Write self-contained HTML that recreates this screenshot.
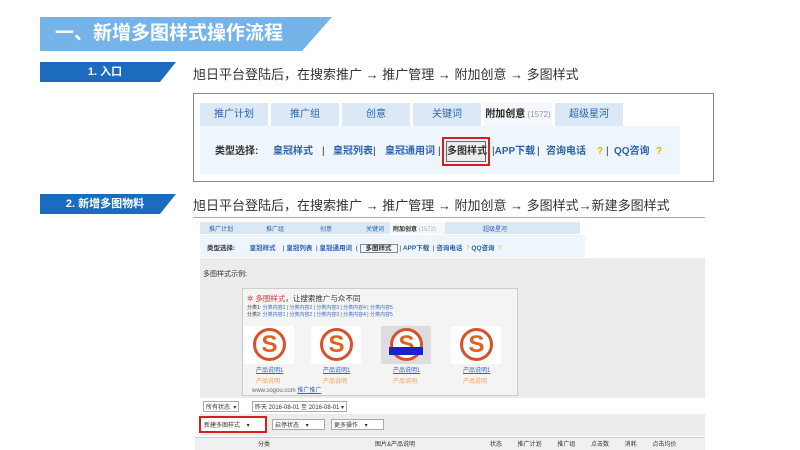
<!DOCTYPE html>
<html><head><meta charset="utf-8"><style>
*{margin:0;padding:0;box-sizing:border-box}
body{width:800px;height:450px;background:#fff;position:relative;overflow:hidden;font-family:"Liberation Sans","Noto Sans CJK SC",sans-serif;color:#333}
.a{position:absolute;white-space:nowrap}
.s{font-size:8px;white-space:nowrap}
.tab{position:absolute;background:#dbe9f6;color:#2a62b0;text-align:center;font-size:10px}
.lk{color:#2a62b0;font-weight:bold}
.r1{position:absolute;top:146px;font-size:10px;line-height:12px;white-space:nowrap}
.logo{position:absolute;width:50px;height:38px;background:#fff}
.logo .c{position:absolute;left:9px;top:2px;width:33px;height:33px;border-radius:50%;border:3px solid #d9502a;background:#fff;color:#e06020;font:bold 24px/27px "Liberation Sans",sans-serif;text-align:center}
</style></head><body>
<svg class="a" style="left:40px;top:17px" width="292" height="34"><polygon points="0,0 292,0 262,34 0,34" fill="#75b3e8"/></svg>
<div class="a" style="left:55px;top:19px;color:#fff;font-size:19px;font-weight:bold;line-height:30px">一、新增多图样式操作流程</div>

<svg class="a" style="left:40px;top:62px" width="136" height="20"><polygon points="0,0 136,0 120,20 0,20" fill="#1b6cbf"/></svg>
<div class="a" style="left:40px;top:62px;width:130px;text-align:center;color:#fff;font-size:11px;font-weight:bold;line-height:20px">1. 入口</div>
<div class="a" style="left:193px;top:66px;font-size:13px;line-height:18px">旭日平台登陆后，在搜索推广 → 推广管理 → 附加创意 → 多图样式</div>

<div class="a" style="left:193px;top:93px;width:521px;height:89px;border:1px solid #888"></div>
<div class="tab" style="left:200px;top:103px;width:68px;height:23px;line-height:23px">推广计划</div>
<div class="tab" style="left:271px;top:103px;width:68px;height:23px;line-height:23px">推广组</div>
<div class="tab" style="left:342px;top:103px;width:68px;height:23px;line-height:23px">创意</div>
<div class="tab" style="left:413px;top:103px;width:68px;height:23px;line-height:23px">关键词</div>
<div class="tab" style="left:484px;top:103px;width:68px;height:23px;line-height:23px;background:#f4f8fc;color:#222;font-weight:bold">附加创意<span style="font-weight:normal;color:#999;font-size:8px"> (1572)</span></div>
<div class="tab" style="left:555px;top:103px;width:68px;height:23px;line-height:23px">超级星河</div>
<div class="a" style="left:200px;top:126px;width:480px;height:48px;background:#eef5fc"></div>
<div class="r1" style="left:215px"><b>类型选择:</b></div>
<div class="r1 lk" style="left:273px">皇冠样式</div>
<div class="r1" style="left:322px">|</div>
<div class="r1 lk" style="left:333px">皇冠列表</div>
<div class="r1" style="left:373px">|</div>
<div class="r1 lk" style="left:385px">皇冠通用词</div>
<div class="r1" style="left:438px">|</div>
<div class="a" style="left:442px;top:137px;width:48px;height:29px;border:2px solid #d42020"></div>
<div class="a" style="left:446px;top:141px;width:40px;height:21px;border:1px solid #666;background:#eee;font-size:10px;font-weight:bold;text-align:center;line-height:19px">多图样式</div>
<div class="r1" style="left:492px">|<span class="lk">APP下载</span></div>
<div class="r1" style="left:537px">|</div>
<div class="r1 lk" style="left:546px">咨询电话</div>
<div class="r1" style="left:597px;color:#e8b000;font-weight:bold">?</div>
<div class="r1" style="left:606px">|</div>
<div class="r1 lk" style="left:614px">QQ咨询</div>
<div class="r1" style="left:656px;color:#e8b000;font-weight:bold">?</div>

<svg class="a" style="left:40px;top:194px" width="136" height="20"><polygon points="0,0 136,0 120,20 0,20" fill="#1b6cbf"/></svg>
<div class="a" style="left:40px;top:194px;width:130px;text-align:center;color:#fff;font-size:11px;font-weight:bold;line-height:20px">2. 新增多图物料</div>
<div class="a" style="left:193px;top:197px;font-size:13px;line-height:18px">旭日平台登陆后，在搜索推广 → 推广管理 → 附加创意 → 多图样式→新建多图样式</div>
<div class="a" style="left:193px;top:217px;width:512px;height:1px;background:#aaa"></div>

<div class="a" style="left:200px;top:222px;width:380px;height:12px;background:#dbe9f6"></div>
<div class="a s" style="left:209px;top:224px;font-size:6px;color:#2a62b0">推广计划</div>
<div class="a s" style="left:266px;top:224px;font-size:6px;color:#2a62b0">推广组</div>
<div class="a s" style="left:320px;top:224px;font-size:6px;color:#2a62b0">创意</div>
<div class="a s" style="left:366px;top:224px;font-size:6px;color:#2a62b0">关键词</div>
<div class="a" style="left:390px;top:222px;width:55px;height:12px;background:#f4f8fc"></div>
<div class="a s" style="left:393px;top:224px;font-size:6px;font-weight:bold">附加创意<span style="color:#aaa;font-weight:normal"> (1572)</span></div>
<div class="a s" style="left:483px;top:224px;font-size:6px;color:#2a62b0">超级星河</div>
<div class="a" style="left:200px;top:235px;width:385px;height:22px;background:#eef5fc"></div>
<div class="a s" style="left:207px;top:242px;font-size:6.5px"><b>类型选择:</b>&nbsp;&nbsp;&nbsp;&nbsp;&nbsp;&nbsp;&nbsp; <span class="lk">皇冠样式</span> &nbsp;&nbsp; | <span class="lk">皇冠列表</span> &nbsp;| <span class="lk">皇冠通用词</span> &nbsp;( <span style="border:1px solid #888;padding:0 5px;font-weight:bold">多图样式</span> | <span class="lk">APP下载</span> &nbsp;| <span class="lk">咨询电话</span> &nbsp;<span style="color:#e8b000">?</span> <span class="lk">QQ咨询</span> &nbsp;<span style="color:#e8b000">?</span></div>
<div class="a" style="left:200px;top:258px;width:505px;height:140px;background:#ececec"></div>
<div class="a s" style="left:203px;top:269px;font-size:7px">多图样式示例:</div>
<div class="a" style="left:242px;top:288px;width:276px;height:108px;border:1px solid #ccc;background:#f4f4f4"></div>
<div class="a s" style="left:247px;top:293px;font-size:7.5px"><span style="color:#d33">✲ 多图样式</span>，让搜索推广与众不同</div>
<div class="a s" style="left:247px;top:305px;font-size:5px;line-height:7px">分类1: <span style="color:#36c">分类内容1 | 分类内容2 | 分类内容3 | 分类内容4 | 分类内容5</span><br>分类2: <span style="color:#36c">分类内容1 | 分类内容2 | 分类内容3 | 分类内容4 | 分类内容5</span></div>
<div class="logo" style="left:244px;top:326px"><div class="c">S</div></div>
<div class="logo" style="left:311px;top:326px"><div class="c">S</div></div>
<div class="logo" style="left:381px;top:326px;background:#ddd"><div class="c">S</div><div class="a" style="left:8px;top:21px;width:34px;height:8px;background:#1a22c8"></div></div>
<div class="logo" style="left:451px;top:326px"><div class="c">S</div></div>
<div class="a s" style="left:256px;top:365px;font-size:6px;color:#36c;text-decoration:underline">产品说明1</div>
<div class="a s" style="left:323px;top:365px;font-size:6px;color:#36c;text-decoration:underline">产品说明1</div>
<div class="a s" style="left:393px;top:365px;font-size:6px;color:#36c;text-decoration:underline">产品说明1</div>
<div class="a s" style="left:463px;top:365px;font-size:6px;color:#36c;text-decoration:underline">产品说明1</div>
<div class="a s" style="left:256px;top:376px;font-size:6px;color:#f0a060">产品说明</div>
<div class="a s" style="left:323px;top:376px;font-size:6px;color:#f0a060">产品说明</div>
<div class="a s" style="left:393px;top:376px;font-size:6px;color:#f0a060">产品说明</div>
<div class="a s" style="left:463px;top:376px;font-size:6px;color:#f0a060">产品说明</div>
<div class="a s" style="left:252px;top:385px;font-size:6px;color:#666">www.sogou.com <span style="color:#36c;text-decoration:underline">推广推广</span></div>

<div class="a s" style="left:203px;top:401px;font-size:6px;border:1px solid #aaa;padding:0 2px;background:#fff">所有状态 &nbsp;▾</div>
<div class="a s" style="left:252px;top:401px;font-size:6px;border:1px solid #aaa;padding:0 2px;background:#fff">昨天 2016-08-01 至 2016-08-01 ▾</div>
<div class="a" style="left:200px;top:414px;width:505px;height:22px;background:#ececec"></div>
<div class="a" style="left:199px;top:416px;width:68px;height:17px;border:2px solid #d42020;background:#fff"></div>
<div class="a s" style="left:204px;top:420px;font-size:6px">新建多图样式 &nbsp;&nbsp;&nbsp;▾</div>
<div class="a s" style="left:272px;top:419px;font-size:6px;border:1px solid #aaa;padding:0 2px;background:#fff;width:53px">启停状态 &nbsp;&nbsp;&nbsp;▾</div>
<div class="a s" style="left:331px;top:419px;font-size:6px;border:1px solid #aaa;padding:0 2px;background:#fff;width:53px">更多操作 &nbsp;&nbsp;&nbsp;▾</div>
<div class="a" style="left:195px;top:437px;width:510px;height:13px;background:#f0f0f0;border-top:1px solid #ccc"></div>
<div class="a s" style="left:258px;top:439px;font-size:6px">分类</div>
<div class="a s" style="left:375px;top:439px;font-size:6px">图片&产品说明</div>
<div class="a s" style="left:490px;top:439px;font-size:6px;word-spacing:14px">状态 推广计划 推广组 点击数 消耗 点击均价</div>
</body></html>
